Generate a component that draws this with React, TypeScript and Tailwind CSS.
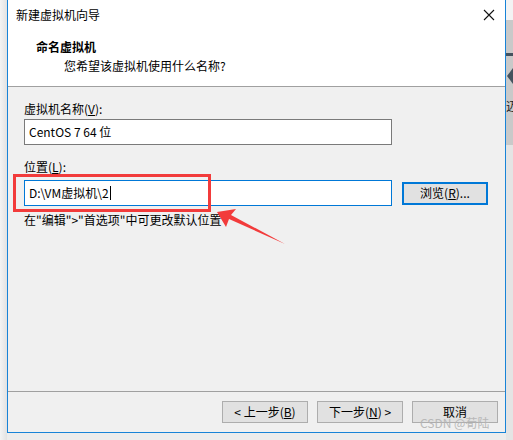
import React from "react";

const font = { fontFamily: '"Noto Sans CJK SC", "Microsoft YaHei", sans-serif' };

function Btn({ children, focused = false }: { children: React.ReactNode; focused?: boolean }) {
  return (
    <div
      className={
        "flex items-center justify-center bg-[#e1e1e1] text-[12px] text-black " +
        (focused ? "h-[23px] w-[86px] border-2 border-[#0078d7]" : "h-[22px] w-[86px] border border-[#adadad]")
      }
    >
      {children}
    </div>
  );
}

export default function App() {
  return (
    <div className="relative flex h-[440px] w-[513px] overflow-hidden bg-[#ececec]" style={font}>
      {/* left shadow */}
      <div className="h-full w-[7px] bg-gradient-to-r from-[#f4f4f4] to-[#e2e2e2]" />
      {/* window */}
      <div className="flex h-[433px] w-[499px] flex-col border-x border-b border-[#1883d7] bg-[#f0f0f0]">
        <div className="flex h-[87px] flex-col border-b border-[#a0a0a0] bg-white">
          <div className="flex h-[30px] items-center justify-between pl-[8px] pr-[9px]">
            <span className="text-[12px] leading-none text-black">新建虚拟机向导</span>
            <svg width="12" height="12" viewBox="0 0 12 12" className="mr-[1px]">
              <path d="M1 1 L11 11 M11 1 L1 11" stroke="#111" strokeWidth="1.1" />
            </svg>
          </div>
          <div className="mt-[9px] pl-[28px] text-[12px] font-bold leading-[16px] text-black">命名虚拟机</div>
          <div className="mt-[3px] pl-[56px] text-[12px] leading-[16px] text-black">您希望该虚拟机使用什么名称?</div>
        </div>
        <div className="flex flex-1 flex-col pl-[16px]">
          <div className="mt-[14px] text-[12px] leading-[16px] text-black">
            虚拟机名称(<span className="underline">V</span>):
          </div>
          <div className="mt-[2px] flex h-[26px] w-[368px] items-center border border-[#7a7a7a] bg-white pl-[4px] text-[12px] text-black">
            CentOS 7 64 位
          </div>
          <div className="mt-[14px] text-[12px] leading-[16px] text-black">
            位置(<span className="underline">L</span>):
          </div>
          <div className="mt-[5px] flex items-center">
            <div className="flex h-[26px] w-[368px] items-center border border-[#0078d7] bg-white pl-[4px] text-[12px] text-black">
              D:\VM虚拟机\2<span className="ml-[1px] inline-block h-[14px] w-[1px] bg-black" />
            </div>
            <div className="ml-[10px]">
              <Btn focused>
                浏览(<span className="underline">R</span>)...
              </Btn>
            </div>
          </div>
          <div className="mt-[6px] text-[12px] leading-[16px] text-black">在"编辑"&gt;"首选项"中可更改默认位置</div>
        </div>
        <div className="mx-0 border-t border-[#a0a0a0]" />
        <div className="flex h-[40px] items-start justify-end gap-[9px] pr-[7px] pt-[9px]">
          <Btn>
            &lt; 上一步(<span className="underline">B</span>)
          </Btn>
          <Btn>
            下一步(<span className="underline">N</span>) &gt;
          </Btn>
          <Btn>取消</Btn>
        </div>
      </div>
      {/* right background strip */}
      <div className="flex h-full w-[7px] flex-col">
        <div className="h-[20px] bg-[#f3f3f3]" />
        <div className="relative h-[125px] bg-[#c9c9c9]">
          <div className="absolute left-0 top-[33px] h-[3px] w-[7px] bg-[#44525e]" />
          <div className="absolute left-[1px] top-[48px] h-0 w-0 border-y-[8px] border-r-[6px] border-y-transparent border-r-[#44525e]" />
          <div className="absolute left-0 top-[80px] text-[12px] leading-none text-[#222]">迈</div>
        </div>
        <div className="flex-1 bg-[#e4e4e4]" />
      </div>

      {/* red highlight rectangle */}
      <div className="absolute left-[13px] top-[174px] h-[38px] w-[198px] border-[3px] border-[#f23b3b]" />
      {/* red arrow */}
      <svg className="absolute left-0 top-0" width="513" height="440" viewBox="0 0 513 440">
        <polygon points="217,212 236,209 231,215 285,244 229,219 226,227" fill="#f23b3b" />
      </svg>
      {/* watermark */}
      <div className="absolute left-[420px] top-[417px] text-[12px] leading-none text-[#b4b4b4] opacity-90">CSDN @荀陆</div>
    </div>
  );
}
